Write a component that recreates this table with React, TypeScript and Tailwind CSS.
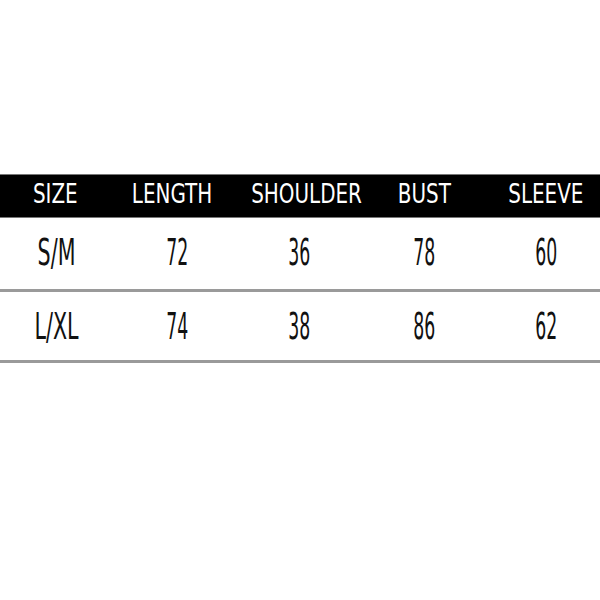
import React from "react";

const header = ["SIZE", "LENGTH", "SHOULDER", "BUST", "SLEEVE"];
const rows = [
  ["S/M", "72", "36", "78", "60"],
  ["L/XL", "74", "38", "86", "62"],
];

const cols = "grid grid-cols-[110px_130px_126px_116px_128px] w-[610px]";
const headShift = ["", "pr-[6px]", "pl-[8px]", "", ""];
const dataShift = ["pl-[4px]", "pl-[4px]", "pr-[8px]", "", ""];

export default function App() {
  return (
    <div className="w-[600px] h-[600px] overflow-hidden bg-white pt-[174px] font-['DejaVu_Sans_Condensed','DejaVu_Sans',sans-serif]">
      <div className="w-[600px] bg-black border-y border-[#777]">
        <div className={`${cols} h-[42px] items-center pb-[6px]`}>
          {header.map((h, j) => (
            <div key={h} className={`flex justify-center ${headShift[j]}`}>
              <span className="inline-block text-[27px] leading-none text-white scale-x-[0.82] whitespace-nowrap">{h}</span>
            </div>
          ))}
        </div>
      </div>
      {rows.map((r, i) => (
        <div key={i} className="w-[600px] border-b-[3px] border-[#9a9a9a]">
          <div className={`${cols} items-center ${i === 0 ? "h-[71px] pb-[2px]" : "h-[68px]"}`}>
            {r.map((c, j) => (
              <div key={j} className={`flex justify-center ${dataShift[j]}`}>
                <span
                  className={`inline-block text-[37px] leading-none text-[#111] whitespace-nowrap ${j === 0 ? "scale-x-[0.62]" : "scale-x-[0.52]"}`}
                >
                  {c}
                </span>
              </div>
            ))}
          </div>
        </div>
      ))}
    </div>
  );
}
